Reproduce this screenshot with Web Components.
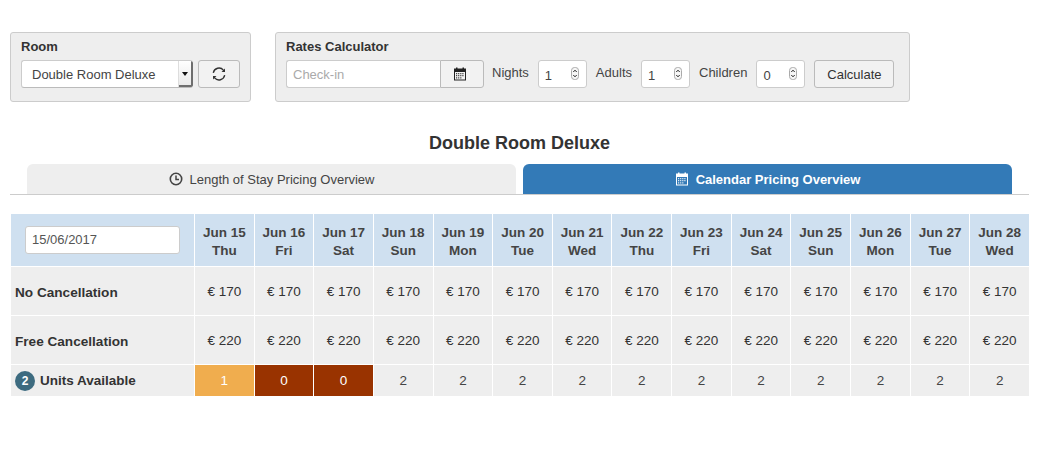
<!DOCTYPE html>
<html>
<head>
<meta charset="utf-8">
<title>Rates</title>
<style>
  html, body { margin: 0; padding: 0; background: #fff; }
  body { font: 13px/18px "Liberation Sans", Arial, sans-serif; color: #333; }
  #top { display: flex; gap: 24px; padding: 32px 0 0 10px; }
</style>
</head>
<body>
<div id="top">
  <room-panel></room-panel>
  <rates-panel></rates-panel>
</div>
<room-title>Double Room Deluxe</room-title>
<pricing-tabs></pricing-tabs>
<price-table></price-table>

<script>
const ICONS = {
  refresh: `<svg viewBox="0 0 16 16" width="16" height="16" fill="none" stroke="currentColor" stroke-width="1.350">
      <path d="M2.300 6.800A5.800 5.800 0 0 1 12.400 4.100L13.400 5.200"/>
      <path d="M13.700 9.200A5.800 5.800 0 0 1 3.600 11.900L2.600 10.800"/>
      <path d="M14 2.500V6H10.500z" fill="currentColor" stroke="none"/>
      <path d="M2 13.500V10H5.500z" fill="currentColor" stroke="none"/>
    </svg>`,
  calendar: `<svg viewBox="0 0 14 14" width="14" height="14">
      <path fill="currentColor" d="M1 1.500h2V.5h1.500v1h5v-1H11v1h2V13.500H1zM2 5v7.500h10V5z"/>
      <path fill="currentColor" opacity=".85" d="M3 6h1.200v1.200H3zM5.100 6h1.200v1.200H5.100zM7.200 6h1.200v1.200H7.200zM9.300 6h1.200v1.200H9.300zM3 8.100h1.200v1.200H3zM5.100 8.100h1.200v1.200H5.100zM7.200 8.100h1.200v1.200H7.200zM9.300 8.100h1.200v1.200H9.300zM3 10.200h1.200v1.200H3zM5.100 10.200h1.200v1.200H5.100zM7.200 10.200h1.200v1.200H7.200z"/>
    </svg>`,
  clock: `<svg viewBox="0 0 14 14" width="14" height="14" fill="none" stroke="currentColor">
      <circle cx="7" cy="7" r="5.700" stroke-width="1.600"/>
      <path d="M7 3.500V7.500H10" stroke-width="1.500"/>
    </svg>`
};

class GreyPanel extends HTMLElement {
  constructor() {
    super();
    this.attachShadow({ mode: "open" });
    this.shadowRoot.innerHTML = `
    <style>
      :host { display: block; box-sizing: border-box; height: 70px; padding: 5px 10px 0; background: #eee; border: 1px solid #ccc; border-radius: 3px; }
      h4 { margin: 0 0 4px; font-size: 13px; line-height: 18px; font-weight: bold; color: #333; }
      .row { display: flex; align-items: flex-start; }
    </style>
    <h4>${this.getAttribute("heading")}</h4>
    <div class="row"><slot></slot></div>`;
  }
}
customElements.define("grey-panel", GreyPanel);

class UiButton extends HTMLElement {
  constructor() {
    super();
    this.attachShadow({ mode: "open" });
    this.shadowRoot.innerHTML = `
    <style>
      :host { display: flex; box-sizing: border-box; height: 28px; padding-top: 1px; align-items: center; justify-content: center; background: #f2f2f2; border: 1px solid #bbb; border-radius: 3px; color: #333; font-size: 13px; }
    </style>
    <slot></slot>`;
  }
}
customElements.define("ui-button", UiButton);

class NumField extends HTMLElement {
  constructor() {
    super();
    this.attachShadow({ mode: "open" });
    this.shadowRoot.innerHTML = `
    <style>
      :host { display: flex; box-sizing: border-box; width: 49px; height: 28px; padding: 3px 7px 0 6px; align-items: center; justify-content: space-between; background: #fff; border: 1px solid #ccc; border-radius: 3px; font-size: 13px; color: #444; }
      svg { display: block; margin-top: -5px; }
    </style>
    <span><slot></slot></span>
    <svg viewBox="0 0 8 13" width="8" height="13">
      <rect x=".5" y=".5" width="7" height="12" rx="3" fill="#f6f6f6" stroke="#aaa"/>
      <path d="M2.300 5L4 3.200 5.700 5M2.300 8L4 9.800 5.700 8" fill="none" stroke="#222"/>
    </svg>`;
  }
}
customElements.define("num-field", NumField);

class RoomPanel extends HTMLElement {
  constructor() {
    super();
    this.attachShadow({ mode: "open" });
    this.shadowRoot.innerHTML = `
    <style>
      :host { display: block; width: 241px; }
      .select { display: flex; box-sizing: border-box; width: 172px; height: 28px; background: #fff; border: 1px solid #ccc; border-right: 0; border-bottom-color: #bbb; border-radius: 3px; overflow: hidden; }
      .val { flex: 1; padding-left: 10px; line-height: 27px; font-size: 13px; color: #444; }
      .arrow { display: flex; width: 14px; align-items: center; justify-content: center; background: linear-gradient(#fff, #e8e8e8); border-left: 1px solid #ddd; box-shadow: inset -2px -2px 0 #6e6e6e; }
      .arrow i { display: block; margin: -1px 2px 0 0; border: 3.500px solid transparent; border-top: 4px solid #111; border-bottom: 0; }
      ui-button { width: 42px; margin-left: 5px; }
      ui-button span { display: flex; margin: -1px 1px 0 0; }
    </style>
    <grey-panel heading="Room">
      <div class="select"><div class="val">Double Room Deluxe</div><div class="arrow"><i></i></div></div>
      <ui-button><span>${ICONS.refresh}</span></ui-button>
    </grey-panel>`;
  }
}
customElements.define("room-panel", RoomPanel);

class RatesPanel extends HTMLElement {
  constructor() {
    super();
    this.attachShadow({ mode: "open" });
    this.shadowRoot.innerHTML = `
    <style>
      :host { display: block; width: 635px; }
      .checkin { display: flex; box-sizing: border-box; width: 154px; height: 28px; padding: 1px 0 0 6px; align-items: center; background: #fff; border: 1px solid #ccc; border-right: 0; border-radius: 3px 0 0 3px; color: #aaa; font-size: 13px; }
      .cal { width: 44px; border-radius: 0 3px 3px 0; }
      .cal span { display: flex; margin: -2px 4px 0 0; color: #222; }
      label { margin: 0 9px 0 8px; line-height: 26px; font-size: 13px; color: #444; }
      num-field + label { margin-left: 9px; }
      .calc { width: 80px; margin-left: 9px; }
    </style>
    <grey-panel heading="Rates Calculator">
      <div class="checkin">Check-in</div>
      <ui-button class="cal"><span>${ICONS.calendar}</span></ui-button>
      <label>Nights</label><num-field>1</num-field>
      <label>Adults</label><num-field>1</num-field>
      <label>Children</label><num-field>0</num-field>
      <ui-button class="calc">Calculate</ui-button>
    </grey-panel>`;
  }
}
customElements.define("rates-panel", RatesPanel);

class RoomTitle extends HTMLElement {
  constructor() {
    super();
    this.attachShadow({ mode: "open" });
    this.shadowRoot.innerHTML = `
    <style>
      :host { display: block; width: 1039px; margin: 31px 0 11px; text-align: center; font-size: 18px; line-height: 20px; font-weight: bold; color: #333; }
    </style>
    <slot></slot>`;
  }
}
customElements.define("room-title", RoomTitle);

class PricingTabs extends HTMLElement {
  constructor() {
    super();
    this.attachShadow({ mode: "open" });
    this.shadowRoot.innerHTML = `
    <style>
      :host { display: flex; box-sizing: border-box; width: 1019px; margin-left: 10px; padding: 0 17px; gap: 7px; border-bottom: 1px solid #ccc; }
      .tab { display: flex; flex: 1; height: 30px; padding-top: 2px; box-sizing: border-box; align-items: center; justify-content: center; gap: 7px; border-radius: 6px 6px 0 0; font-size: 13px; background: #eee; color: #444; }
      .tab:first-child { gap: 9px; padding-right: 2px; }
      .tab.on { background: #337ab7; color: #fff; font-weight: bold; }
      .tab span { display: flex; margin-top: -3px; }
    </style>
    <div class="tab"><span>${ICONS.clock}</span>Length of Stay Pricing Overview</div>
    <div class="tab on"><span>${ICONS.calendar}</span>Calendar Pricing Overview</div>`;
  }
}
customElements.define("pricing-tabs", PricingTabs);

class PriceTable extends HTMLElement {
  constructor() {
    super();
    this.attachShadow({ mode: "open" });
    const names = ["Thu", "Fri", "Sat", "Sun", "Mon", "Tue", "Wed"];
    const days = [];
    for (let i = 0; i < 14; i++) days.push({ date: 15 + i, name: names[i % 7] });
    const units = { 0: ["1", "few"], 1: ["0", "none"], 2: ["0", "none"] };
    this.shadowRoot.innerHTML = `
    <style>
      :host { display: grid; width: 1018px; margin: 19px 0 0 11px; grid-template-columns: 183px repeat(14, 1fr); grid-template-rows: 52px 48px 48px 31px; gap: 1px; font-size: 13.500px; color: #333; }
      div { display: flex; align-items: center; justify-content: center; background: #eee; }
      .date { justify-content: flex-start; padding-left: 14px; background: #cfe0f0; }
      .date span { display: block; box-sizing: border-box; width: 155px; height: 28px; padding-left: 6px; line-height: 26px; background: #fff; border: 1px solid #ccc; border-radius: 3px; color: #555; font-size: 13px; }
      .head { padding-top: 3px; background: #cfe0f0; color: #444; font-weight: bold; text-align: center; line-height: 18px; }
      .label { justify-content: flex-start; padding: 3px 0 0 4px; font-weight: bold; font-size: 13.600px; }
      .price { padding-top: 1px; }
      .units { justify-content: flex-start; padding: 1px 0 0 4px; gap: 5px; font-weight: bold; }
      .units b { display: flex; width: 20px; height: 20px; align-items: center; justify-content: center; background: #3d6b80; border-radius: 50%; color: #fff; font-size: 12px; }
      .count { padding-top: 1px; color: #444; }
      .few { background: #f0ad4e; color: #fff; }
      .none { background: #993300; color: #fff; }
    </style>
    <div class="date"><span>15/06/2017</span></div>
    ${days.map(d => `<div class="head">Jun ${d.date}<br>${d.name}</div>`).join("")}
    <div class="label">No Cancellation</div>
    ${days.map(() => `<div class="price">€ 170</div>`).join("")}
    <div class="label">Free Cancellation</div>
    ${days.map(() => `<div class="price">€ 220</div>`).join("")}
    <div class="units"><b>2</b>Units Available</div>
    ${days.map((d, i) => {
      const u = units[i] || ["2", ""];
      return `<div class="count ${u[1]}">${u[0]}</div>`;
    }).join("")}`;
  }
}
customElements.define("price-table", PriceTable);
</script>
</body>
</html>
